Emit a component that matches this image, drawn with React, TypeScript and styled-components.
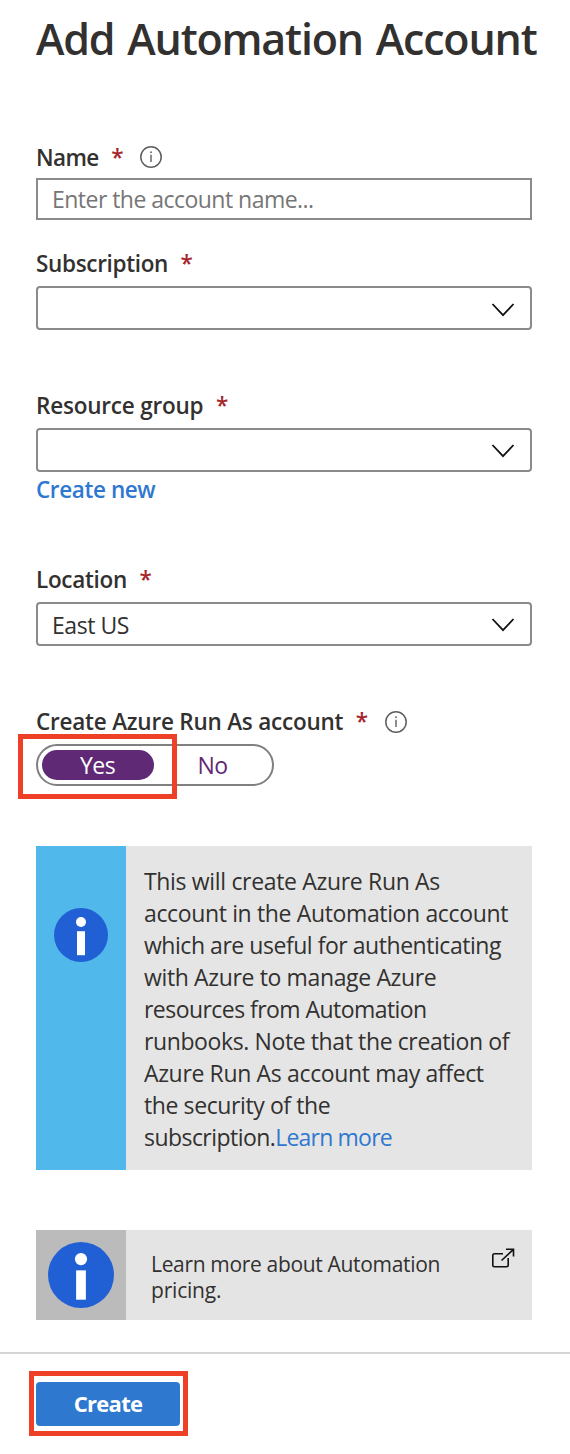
import React from "react";
import styled, { createGlobalStyle } from "styled-components";

const GlobalStyle = createGlobalStyle`
  * { box-sizing: border-box; }
  body {
    margin: 0;
    background: #ffffff;
    color: #323130;
    font-family: "Open Sans", "Noto Sans", sans-serif;
  }
`;

const Page = styled.div`
  width: 570px;
  height: 1454px;
  display: flex;
  flex-direction: column;
  overflow: hidden;
`;

const Content = styled.main`
  height: 1352px;
  padding: 9px 38px 0 36px;
  display: flex;
  flex-direction: column;
`;

const Title = styled.h1`
  margin: 0 -20px 0 0;
  height: 132px;
  font-size: 43px;
  line-height: 60px;
  font-weight: 600;
  letter-spacing: -1.2px;
  word-spacing: 3px;
  white-space: nowrap;
`;

const Field = styled.section<{ $height: number }>`
  height: ${(p) => p.$height}px;
  flex: none;
`;

const LabelRow = styled.div<{ $height: number }>`
  height: ${(p) => p.$height}px;
  display: flex;
  align-items: flex-start;
  line-height: 34px;
`;

const Label = styled.label<{ $spacing: number }>`
  font-size: 22.5px;
  font-weight: 600;
  letter-spacing: ${(p) => p.$spacing}px;
  white-space: nowrap;
`;

const Required = styled.span`
  margin-left: 12.5px;
  color: #a4262c;
  font-size: 22.5px;
  font-weight: 600;
`;

const InfoMark = styled.svg<{ $top: number }>`
  margin: ${(p) => p.$top}px 0 0 15.5px;
  width: 24px;
  height: 24px;
`;

const TextInput = styled.input`
  display: block;
  width: 496px;
  height: 42px;
  padding: 0 14px 1px;
  border: 2px solid #8a8a8a;
  border-radius: 0;
  font: 400 23px "Open Sans", sans-serif;
  letter-spacing: -0.53px;
  background: #fff;
  &::placeholder {
    color: #767676;
    opacity: 1;
  }
`;

const Select = styled.div<{ $arrowLift?: number }>`
  width: 496px;
  height: 44px;
  padding: 3px 15px 0 14px;
  display: flex;
  align-items: center;
  justify-content: space-between;
  border: 2px solid #8a8a8a;
  border-radius: 4px;
  font-size: 23px;
  line-height: 36px;
  letter-spacing: -0.45px;

  span {
    padding-bottom: 2px;
  }

  svg {
    margin-bottom: ${(p) => (p.$arrowLift ?? 0) * 2}px;
  }
`;

const Link = styled.a<{ $strong?: boolean; $spacing: number }>`
  color: #2f78d0;
  font-weight: ${(p) => (p.$strong ? 600 : 400)};
  letter-spacing: ${(p) => p.$spacing}px;
  text-decoration: none;
`;

const CreateNew = styled.div`
  font-size: 22.5px;
  line-height: 36px;
`;

const Toggle = styled.div`
  width: 238px;
  height: 42px;
  padding: 4px;
  display: flex;
  border: 2px solid #808080;
  border-radius: 21px;
  position: relative;
`;

const Option = styled.button<{ $active?: boolean }>`
  flex: none;
  width: ${(p) => (p.$active ? 112 : 118)}px;
  height: 30px;
  padding: 0 1px 0 0;
  border: 0;
  border-radius: 15px;
  background: ${(p) => (p.$active ? "#5f2976" : "transparent")};
  color: ${(p) => (p.$active ? "#ffffff" : "#5f2976")};
  font: 400 23px/30px "Open Sans", sans-serif;
  letter-spacing: -0.5px;
`;

const Highlight = styled.div<{ $left: number; $top: number }>`
  position: absolute;
  left: ${(p) => p.$left}px;
  top: ${(p) => p.$top}px;
  width: 159px;
  height: 65px;
  border: 5px solid #ee4026;
  pointer-events: none;
`;

const Notice = styled.aside`
  width: 496px;
  height: 324px;
  flex: none;
  display: flex;
  background: #e5e5e5;
`;

const NoticeSide = styled.div<{ $color: string; $top: number }>`
  width: 90px;
  flex: none;
  padding-top: ${(p) => p.$top}px;
  display: flex;
  justify-content: center;
  background: ${(p) => p.$color};
`;

const NoticeText = styled.p`
  margin: 0;
  padding: 19px 0 0 18px;
  font-size: 23px;
  line-height: 32px;
`;

const Line = styled.span<{ $spacing: number }>`
  display: block;
  white-space: nowrap;
  letter-spacing: ${(p) => p.$spacing}px;
`;

const Pricing = styled(Notice)`
  height: 90px;
  margin-top: 60px;
  background: #e4e4e4;
`;

const PricingText = styled.p`
  margin: 0;
  padding: 21px 0 0 25px;
  flex: 1;
  font-size: 21px;
  line-height: 26px;
`;

const ExternalIcon = styled.svg`
  width: 26px;
  height: 24px;
  margin: 16px 16px 0 0;
`;

const Footer = styled.footer`
  height: 102px;
  padding: 28px 36px 0;
  border-top: 2px solid #d6d6d6;
`;

const ButtonWrap = styled.div`
  position: relative;
  width: 144px;
`;

const PrimaryButton = styled.button`
  display: block;
  width: 144px;
  height: 44px;
  padding: 0 0 2px;
  border: 0;
  border-radius: 4px;
  background: #2f78d0;
  color: #fff;
  font: 700 22px/42px "Open Sans", sans-serif;
  letter-spacing: -0.7px;
`;

const Info = ({ top }: { top: number }) => (
  <InfoMark $top={top} viewBox="0 0 24 24" fill="none" stroke="#605e5c">
    <circle cx="12" cy="12" r="10.2" strokeWidth="1.5" />
    <path d="M12 9.8V17" strokeWidth="1.4" />
    <circle cx="12" cy="7.2" r="0.9" fill="#605e5c" stroke="none" />
  </InfoMark>
);

const Chevron = () => (
  <svg width="24" height="16" viewBox="0 0 24 16" fill="none" stroke="#111" strokeWidth="1.8">
    <path d="M1.5 2L12 13.2L22.5 2" />
  </svg>
);

const InfoDisc = ({ size }: { size: number }) => (
  <svg width={size} height={size} viewBox="0 0 54 54">
    <circle cx="27" cy="27" r="27" fill="#2160d4" />
    <circle cx="27" cy="14" r="5" fill="#fff" />
    <path d="M23 23.2H31V47.2H23Z" fill="#fff" />
  </svg>
);

export default function App() {
  return (
    <>
      <GlobalStyle />
      <Page>
        <Content>
          <Title>Add Automation Account</Title>

          <Field $height={106}>
            <LabelRow $height={37}>
              <Label $spacing={-0.6}>Name</Label>
              <Required>*</Required>
              <Info top={4} />
            </LabelRow>
            <TextInput placeholder="Enter the account name..." />
          </Field>

          <Field $height={142}>
            <LabelRow $height={39}>
              <Label $spacing={-0.33}>Subscription</Label>
              <Required>*</Required>
            </LabelRow>
            <Select>
              <span />
              <Chevron />
            </Select>
          </Field>

          <Field $height={174}>
            <LabelRow $height={39}>
              <Label $spacing={-0.2}>Resource group</Label>
              <Required>*</Required>
            </LabelRow>
            <Select $arrowLift={1}>
              <span />
              <Chevron />
            </Select>
            <CreateNew>
              <Link $strong $spacing={-0.4}>
                Create new
              </Link>
            </CreateNew>
          </Field>

          <Field $height={142}>
            <LabelRow $height={39}>
              <Label $spacing={-0.3}>Location</Label>
              <Required>*</Required>
            </LabelRow>
            <Select $arrowLift={1}>
              <span>East US</span>
              <Chevron />
            </Select>
          </Field>

          <Field $height={141}>
            <LabelRow $height={39}>
              <Label $spacing={-0.22}>Create Azure Run As account</Label>
              <Required>*</Required>
              <Info top={5} />
            </LabelRow>
            <Toggle>
              <Option $active>Yes</Option>
              <Option>No</Option>
              <Highlight $left={-20} $top={-12} />
            </Toggle>
          </Field>

          <Notice>
            <NoticeSide $color="#50b8eb" $top={62}>
              <InfoDisc size={54} />
            </NoticeSide>
            <NoticeText>
              <Line $spacing={-0.33}>This will create Azure Run As</Line>
              <Line $spacing={-0.36}>account in the Automation account</Line>
              <Line $spacing={-0.46}>which are useful for authenticating</Line>
              <Line $spacing={-0.36}>with Azure to manage Azure</Line>
              <Line $spacing={-0.55}>resources from Automation</Line>
              <Line $spacing={-0.39}>runbooks. Note that the creation of</Line>
              <Line $spacing={-0.35}>Azure Run As account may affect</Line>
              <Line $spacing={-0.4}>the security of the</Line>
              <Line $spacing={-0.55}>
                subscription.<Link $spacing={-0.8}>Learn more</Link>
              </Line>
            </NoticeText>
          </Notice>

          <Pricing>
            <NoticeSide $color="#bbbbbb" $top={12}>
              <InfoDisc size={66} />
            </NoticeSide>
            <PricingText>
              <Line $spacing={-0.33}>Learn more about Automation</Line>
              <Line $spacing={-0.2}>pricing.</Line>
            </PricingText>
            <ExternalIcon viewBox="0 0 26 24" fill="none" stroke="#111" strokeWidth="1.6">
              <path d="M13 7.8H4.5Q2.8 7.8 2.8 9.5V19Q2.8 20.7 4.5 20.7H16.5Q18.2 20.7 18.2 19V12" />
              <path d="M16 3.3H23.5V10.5M23.5 3.3L11.5 14.5" />
            </ExternalIcon>
          </Pricing>
        </Content>
        <Footer>
          <ButtonWrap>
            <PrimaryButton>Create</PrimaryButton>
            <Highlight $left={-7} $top={-11} />
          </ButtonWrap>
        </Footer>
      </Page>
    </>
  );
}
